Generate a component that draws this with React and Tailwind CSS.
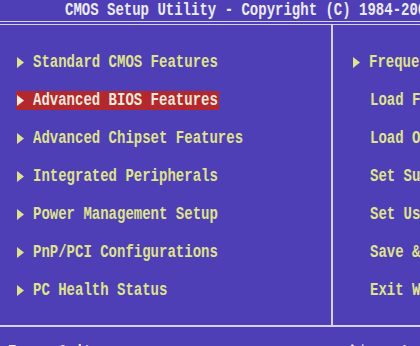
import React from "react";

const leftItems = [
  "Standard CMOS Features",
  "Advanced BIOS Features",
  "Advanced Chipset Features",
  "Integrated Peripherals",
  "Power Management Setup",
  "PnP/PCI Configurations",
  "PC Health Status",
];

const rightItems = [
  { label: "Frequency/Voltage Control", arrow: true },
  { label: "Load Fail-Safe Defaults" },
  { label: "Load Optimized Defaults" },
  { label: "Set Supervisor Password" },
  { label: "Set User Password" },
  { label: "Save & Exit Setup" },
  { label: "Exit Without Saving" },
];

function Arrow({ color }) {
  return (
    <svg width="7" height="11" viewBox="0 0 7 11" className="shrink-0">
      <path d="M0 0 L7 5.5 L0 11 Z" fill={color} />
    </svg>
  );
}

function BiosText({ children, className = "" }) {
  return (
    <span className={`inline-block leading-[14px] scale-y-[1.3] whitespace-nowrap ${className}`}>
      {children}
    </span>
  );
}

export default function App() {
  const selected = 1;

  return (
    <div className="w-[420px] h-[346px] overflow-hidden bg-[#4f3fb6] font-['Liberation_Mono',monospace] font-bold text-[14px] text-[#dfe38c]">
      {/* title */}
      <div className="h-[21px] pl-[65px] text-[#ecebf2]">
        <BiosText>CMOS Setup Utility - Copyright (C) 1984-2006 Award Software</BiosText>
      </div>
      <div className="h-[4px] border-y border-[#d4d2e6]" />

      {/* menus */}
      <div className="flex h-[302px] border-b-2 border-[#d4d2e6]">
        <div className="w-[333px] shrink-0 border-r-2 border-[#d4d2e6] pl-[16px] pt-[18px]">
          {leftItems.map((item, i) => (
            <div key={item} className="h-[38px] flex items-center">
              <div
                className={`flex items-center h-[19px] pl-[1px] pr-[1px] ${
                  i === selected ? "bg-[#b3282c] text-[#f1e9df]" : ""
                }`}
              >
                <Arrow color={i === selected ? "#f3ece4" : "#dfe38c"} />
                <span className="w-[9px]" />
                <BiosText>{item}</BiosText>
              </div>
            </div>
          ))}
        </div>
        <div className="flex-1 pt-[18px] pl-[20px] overflow-hidden">
          {rightItems.map((item) => (
            <div key={item.label} className="h-[38px] flex items-center">
              {item.arrow ? (
                <>
                  <Arrow color="#dfe38c" />
                  <span className="w-[9px] shrink-0" />
                </>
              ) : (
                <span className="w-[17px] shrink-0" />
              )}
              <BiosText>{item.label}</BiosText>
            </div>
          ))}
        </div>
      </div>

      {/* footer */}
      <div className="flex pt-[15px] text-[#ecebf2] whitespace-nowrap">
        <div className="w-[348px] shrink-0 pl-[8px]">
          <BiosText>Esc : Quit</BiosText>
        </div>
        <BiosText className="font-['DejaVu_Sans_Mono',monospace] font-normal tracking-[2px]">↑↓→← : Select Item</BiosText>
      </div>
    </div>
  );
}
